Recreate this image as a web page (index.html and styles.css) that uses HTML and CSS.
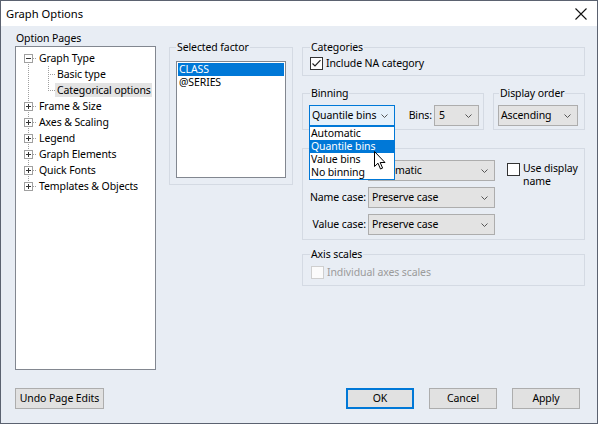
FILE: index.html
```html
<!DOCTYPE html>
<html>
<head>
<meta charset="utf-8">
<title>Graph Options</title>
<link rel="stylesheet" href="styles.css">
</head>
<body>
<div class="dialog">
  <div class="titlebar">
    <span class="title">Graph Options</span>
    <svg class="close" width="12" height="12" viewBox="0 0 12 12"><path d="M0.5 0.5L11.5 11.5M11.5 0.5L0.5 11.5" stroke="#111" stroke-width="1.1" fill="none"/></svg>
  </div>

  <div class="content">
    <div class="pages">
      <div class="pages-label">Option Pages</div>
      <div class="tree">
        <div class="trunk"></div>
        <div class="branch"></div>
        <div class="node">
          <svg class="exp" width="9" height="9" viewBox="0 0 9 9"><rect x="0.5" y="0.5" width="8" height="8" fill="#fff" stroke="#a0a0a0"/><path d="M2 4.5H7" stroke="#333"/></svg>
          <span class="hdash"></span><span class="txt">Graph Type</span>
        </div>
        <div class="node child"><span class="cdash"></span><span class="txt">Basic type</span></div>
        <div class="node child"><span class="cdash"></span><span class="txt sel">Categorical options</span></div>
        <div class="node">
          <svg class="exp" width="9" height="9" viewBox="0 0 9 9"><rect x="0.5" y="0.5" width="8" height="8" fill="#fff" stroke="#a0a0a0"/><path d="M2 4.5H7M4.5 2V7" stroke="#333"/></svg>
          <span class="hdash"></span><span class="txt">Frame &amp; Size</span>
        </div>
        <div class="node">
          <svg class="exp" width="9" height="9" viewBox="0 0 9 9"><rect x="0.5" y="0.5" width="8" height="8" fill="#fff" stroke="#a0a0a0"/><path d="M2 4.5H7M4.5 2V7" stroke="#333"/></svg>
          <span class="hdash"></span><span class="txt">Axes &amp; Scaling</span>
        </div>
        <div class="node">
          <svg class="exp" width="9" height="9" viewBox="0 0 9 9"><rect x="0.5" y="0.5" width="8" height="8" fill="#fff" stroke="#a0a0a0"/><path d="M2 4.5H7M4.5 2V7" stroke="#333"/></svg>
          <span class="hdash"></span><span class="txt">Legend</span>
        </div>
        <div class="node">
          <svg class="exp" width="9" height="9" viewBox="0 0 9 9"><rect x="0.5" y="0.5" width="8" height="8" fill="#fff" stroke="#a0a0a0"/><path d="M2 4.5H7M4.5 2V7" stroke="#333"/></svg>
          <span class="hdash"></span><span class="txt">Graph Elements</span>
        </div>
        <div class="node">
          <svg class="exp" width="9" height="9" viewBox="0 0 9 9"><rect x="0.5" y="0.5" width="8" height="8" fill="#fff" stroke="#a0a0a0"/><path d="M2 4.5H7M4.5 2V7" stroke="#333"/></svg>
          <span class="hdash"></span><span class="txt">Quick Fonts</span>
        </div>
        <div class="node">
          <svg class="exp" width="9" height="9" viewBox="0 0 9 9"><rect x="0.5" y="0.5" width="8" height="8" fill="#fff" stroke="#a0a0a0"/><path d="M2 4.5H7M4.5 2V7" stroke="#333"/></svg>
          <span class="hdash"></span><span class="txt">Templates &amp; Objects</span>
        </div>
      </div>
    </div>

    <fieldset class="group factor">
      <legend>Selected factor</legend>
      <div class="listbox">
        <div class="li sel">CLASS</div>
        <div class="li">@SERIES</div>
      </div>
    </fieldset>

    <div class="right">
      <fieldset class="group cat">
        <legend>Categories</legend>
        <div class="check">
          <svg class="box" width="13" height="13" viewBox="0 0 13 13"><rect x="0.5" y="0.5" width="12" height="12" fill="#fff" stroke="#333"/><path d="M2.5 6.5L5 9L10.5 3.2" stroke="#222" stroke-width="1.2" fill="none"/></svg>
          <span>Include NA category</span>
        </div>
      </fieldset>

      <div class="row2">
        <fieldset class="group binning">
          <legend>Binning</legend>
          <div class="binrow">
            <div class="combo-wrap">
              <div class="combo focus"><span>Quantile bins</span><svg class="chev" width="7" height="4" viewBox="0 0 7 4"><path d="M0.5 0.5L3.5 3.5L6.5 0.5" stroke="#555" fill="none"/></svg></div>
              <div class="dropdown">
                <div class="opt">Automatic</div>
                <div class="opt hi">Quantile bins</div>
                <div class="opt">Value bins</div>
                <div class="opt">No binning</div>
              </div>
              <svg class="cursor" width="13" height="20" viewBox="0 0 13 20"><path d="M0.5 0.5V15.5L4 12.2L6.5 18L8.6 17.1L6.2 11.5H11Z" fill="#fff" stroke="#000" stroke-width="1" stroke-linejoin="round"/></svg>
            </div>
            <div class="bins">
              <span>Bins:</span>
              <div class="combo w45"><span>5</span><svg class="chev" width="7" height="4" viewBox="0 0 7 4"><path d="M0.5 0.5L3.5 3.5L6.5 0.5" stroke="#555" fill="none"/></svg></div>
            </div>
          </div>
        </fieldset>
        <fieldset class="group order">
          <legend>Display order</legend>
          <div class="combo w80"><span>Ascending</span><svg class="chev" width="7" height="4" viewBox="0 0 7 4"><path d="M0.5 0.5L3.5 3.5L6.5 0.5" stroke="#555" fill="none"/></svg></div>
        </fieldset>
      </div>

      <fieldset class="group labels">
        <legend class="covered">Labels</legend>
        <div class="lgrid">
          <span class="lbl covered">Label:</span>
          <div class="combo"><span>Automatic</span><svg class="chev" width="7" height="4" viewBox="0 0 7 4"><path d="M0.5 0.5L3.5 3.5L6.5 0.5" stroke="#555" fill="none"/></svg></div>
          <div class="check use">
            <svg class="box" width="13" height="13" viewBox="0 0 13 13"><rect x="0.5" y="0.5" width="12" height="12" fill="#fff" stroke="#333"/></svg>
            <span class="usetxt">Use display name</span>
          </div>
          <span class="lbl">Name case:</span>
          <div class="combo"><span>Preserve case</span><svg class="chev" width="7" height="4" viewBox="0 0 7 4"><path d="M0.5 0.5L3.5 3.5L6.5 0.5" stroke="#555" fill="none"/></svg></div>
          <span class="lbl">Value case:</span>
          <div class="combo"><span>Preserve case</span><svg class="chev" width="7" height="4" viewBox="0 0 7 4"><path d="M0.5 0.5L3.5 3.5L6.5 0.5" stroke="#555" fill="none"/></svg></div>
        </div>
      </fieldset>

      <fieldset class="group axis">
        <legend>Axis scales</legend>
        <div class="check disabled">
          <svg class="box" width="13" height="13" viewBox="0 0 13 13"><rect x="0.5" y="0.5" width="12" height="12" fill="#fbfbfb" stroke="#cfcfcf"/></svg>
          <span>Individual axes scales</span>
        </div>
      </fieldset>
    </div>
  </div>

  <div class="footer">
    <div class="btn undo">Undo Page Edits</div>
    <div class="btns">
      <div class="btn default">OK</div>
      <div class="btn">Cancel</div>
      <div class="btn">Apply</div>
    </div>
  </div>
</div>
</body>
</html>
```

FILE: styles.css
```css
* { box-sizing: border-box; }
html, body { margin: 0; padding: 0; }
body {
  width: 598px;
  height: 424px;
  overflow: hidden;
  font-family: "Noto Sans", "Open Sans", sans-serif;
  font-size: 10.5px;
  line-height: 13px;
  letter-spacing: -0.1px;
  color: #000;
}
.dialog {
  width: 598px;
  height: 424px;
  border: 1px solid #5b6270;
  background: #e8edf4;
  display: flex;
  flex-direction: column;
}
.titlebar {
  flex: none;
  height: 25px;
  background: #fff;
  display: flex;
  align-items: center;
  justify-content: space-between;
  padding: 0 10px 0 5px;
}
.title { font-size: 11.2px; line-height: 16px; letter-spacing: 0; }
.close { display: block; }

.content {
  display: flex;
  align-items: flex-start;
  padding-left: 14px;
}
.pages { width: 141px; flex: none; padding-top: 5px; }
.pages-label { line-height: 14px; padding-left: 1px; }
.tree {
  margin-top: 1px;
  height: 324px;
  background: #fff;
  border: 1px solid #828790;
  position: relative;
  padding-top: 3px;
}
.trunk {
  position: absolute;
  left: 12px;
  top: 11px;
  width: 1px;
  height: 128px;
  background: repeating-linear-gradient(to bottom, #a0a0a0 0 1px, transparent 1px 2px);
}
.branch {
  position: absolute;
  left: 32px;
  top: 19px;
  width: 1px;
  height: 24px;
  background: repeating-linear-gradient(to bottom, #a0a0a0 0 1px, transparent 1px 2px);
}
.node {
  height: 16px;
  display: flex;
  align-items: center;
  padding-left: 8px;
  white-space: nowrap;
}
.node.child { padding-left: 32px; }
.exp { display: block; position: relative; z-index: 1; flex: none; }
.hdash, .cdash {
  height: 1px;
  background: repeating-linear-gradient(to right, #a0a0a0 0 1px, transparent 1px 2px);
  flex: none;
}
.hdash { width: 4px; }
.cdash { width: 7px; }
.txt { line-height: 14px; padding: 0 2px; }
.txt.sel { background: #e3e3e3; padding-right: 1px; }

.group {
  margin: 0;
  min-width: 0;
  border: 1px solid #d4dae3;
  padding: 0 6px 6px 6px;
  flex: none;
}
.group legend {
  padding: 0 1px;
  margin-left: 1px;
  line-height: 14px;
}
.covered { visibility: hidden; }

.factor { margin: 14px 0 0 13px; width: 124px; }
.factor legend { margin-left: 0; }
.listbox {
  margin-top: 7px;
  height: 117px;
  background: #fff;
  border: 1px solid #828790;
  padding: 1px;
}
.li { line-height: 13px; padding-left: 1px; white-space: nowrap; }
.li.sel { background: #0078d7; color: #fff; }

.right { margin: 14px 0 0 9px; width: 283px; flex: none; display: flex; flex-direction: column; }

.check { display: flex; align-items: center; gap: 3px; white-space: nowrap; line-height: 13px; }
.check .box { display: block; flex: none; }
.cat { padding-bottom: 5px; }
.cat .check { margin-top: 3px; margin-left: 1px; }

.row2 { display: flex; gap: 9px; margin-top: 10px; }
.binning { width: 182px; padding-right: 4px; padding-bottom: 3px; }
.order { width: 92px; padding-left: 4px; padding-bottom: 3px; }
.binrow { display: flex; align-items: center; margin-top: 5px; }
.combo-wrap { position: relative; width: 86px; flex: none; }
.bins { margin-left: auto; display: flex; align-items: center; gap: 2px; }
.order .combo { margin-top: 5px; }

.combo {
  height: 21px;
  border: 1px solid #adadad;
  background: #e3e3e3;
  display: flex;
  align-items: center;
  justify-content: space-between;
  padding: 0 6px 0 3px;
  white-space: nowrap;
}
.combo .chev { display: block; flex: none; }
.combo.focus { border-color: #0078d7; background: #e5f1fb; padding-left: 2px; }
.w45 { width: 45px; padding-left: 4px; }
.w80 { width: 80px; padding-left: 2px; }

.dropdown {
  position: absolute;
  left: 0;
  top: 100%;
  width: 86px;
  background: #fff;
  border: 1px solid #0078d7;
  z-index: 10;
}
.opt { line-height: 13px; padding-left: 1px; white-space: nowrap; }
.opt.hi { background: #0078d7; color: #fff; }
.cursor { position: absolute; left: 65px; top: 46px; z-index: 11; display: block; }

.labels { margin-top: 11px; padding-bottom: 4px; }
.lgrid {
  margin-top: 5px;
  display: grid;
  grid-template-columns: 57px 127px 1fr;
  grid-auto-rows: 21px;
  column-gap: 2px;
  row-gap: 6px;
  align-items: center;
}
.lbl { text-align: right; white-space: nowrap; }
.check.use {
  grid-column: 3;
  grid-row: 1 / span 2;
  align-self: start;
  align-items: flex-start;
  margin-top: 2px;
  padding-left: 10px;
}
.check.use .box { margin-top: 1px; }
.usetxt { white-space: normal; width: 60px; line-height: 13px; }

.axis { margin-top: 7px; }
.axis .check { margin-top: 5px; margin-left: 2px; }
.check.disabled { color: #9b9b9b; }

.footer {
  margin-top: auto;
  display: flex;
  justify-content: space-between;
  padding: 0 17px 14px 14px;
}
.btns { display: flex; gap: 15px; }
.btn {
  height: 21px;
  width: 68px;
  border: 1px solid #adadad;
  background: #e1e1e1;
  display: flex;
  align-items: center;
  justify-content: center;
  white-space: nowrap;
}
.btn.undo { width: 89px; }
.btn.default { border-color: #0078d7; box-shadow: inset 0 0 0 1px #0078d7; }
```
